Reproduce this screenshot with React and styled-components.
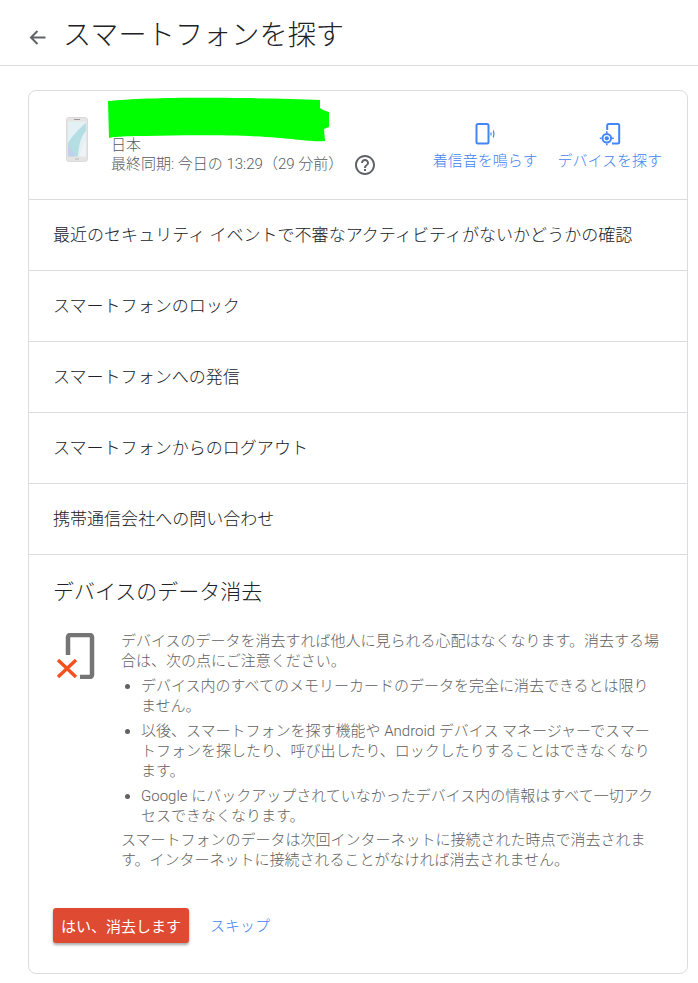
import React from "react";
import styled, { createGlobalStyle } from "styled-components";

const Global = createGlobalStyle`
  html, body { margin: 0; padding: 0; background: #fff; }
  body { font-family: Roboto, "Noto Sans CJK JP", sans-serif; font-weight: 300; color: #202124; }
`;

const Page = styled.div`
  width: 698px;
  height: 983px;
  overflow: hidden;
  background: #fff;
`;
const TopBar = styled.header`
  height: 65px;
  box-sizing: content-box;
  border-bottom: 1px solid #dadce0;
  display: flex;
  align-items: center;
  padding-left: 28px;
  gap: 17px;
`;
const BackIcon = styled.svg`
  width: 19px;
  height: 19px;
  flex: none;
  margin-top: 10px;
`;
const Title = styled.h1`
  margin: 7px 0 0 -1px;
  font-size: 28.2px;
  font-weight: 300;
  line-height: 36px;
  color: #202124;
`;
const Card = styled.section`
  margin: 24px 0 0 28px;
  width: 658px;
  height: 882px;
  border: 1px solid #dadce0;
  border-radius: 8px;
  overflow: hidden;
`;
const DeviceHead = styled.div`
  height: 108px;
  border-bottom: 1px solid #dadce0;
  display: flex;
  position: relative;
`;
const PhoneArt = styled.svg`
  width: 24px;
  height: 46px;
  margin: 26px 0 0 36px;
  flex: none;
`;
const DeviceInfo = styled.div`
  margin: 45px 0 0 22px;
  font-size: 15px;
  line-height: 19px;
  color: #555b60;
`;
const Scribble = styled.svg`
  position: absolute;
  left: 77px;
  top: 6px;
  width: 224px;
  height: 46px;
`;
const SyncRow = styled.div`
  display: flex;
  align-items: center;
  gap: 10px;
  height: 19px;
  white-space: nowrap;
`;
const HelpIcon = styled.svg`
  width: 24px;
  height: 24px;
  flex: none;
`;
const Actions = styled.div`
  display: flex;
  margin-left: auto;
  padding: 31px 25px 0 0;
  gap: 20px;
`;
const Action = styled.div`
  display: flex;
  flex-direction: column;
  align-items: center;
  font-size: 15px;
  line-height: 20px;
  color: #3f7ff0;
  white-space: nowrap;
  gap: 5px;
`;
const ActionIcon = styled.svg`
  width: 24px;
  height: 24px;
`;
const Row = styled.div`
  height: 71px;
  box-sizing: border-box;
  padding: 0 0 3px 24px;
  border-bottom: 1px solid #dadce0;
  display: flex;
  align-items: center;
  font-size: 17.05px;
  color: #202124;
`;
const Wipe = styled.div`
  padding: 23px 0 0 24px;
`;
const WipeTitle = styled.h2`
  margin: 0;
  font-size: 21px;
  line-height: 28px;
  font-weight: 300;
  color: #202124;
`;
const WipeBody = styled.div`
  display: flex;
  margin-top: 25px;
`;
const WipeIcon = styled.svg`
  width: 44px;
  height: 46px;
  flex: none;
  margin-top: 2px;
`;
const Copy = styled.div`
  margin-left: 24px;
  width: 540px;
  font-size: 15px;
  line-height: 20px;
  color: #616161;
`;
const Para = styled.p`
  margin: 0;
`;
const Bullets = styled.ul`
  margin: 5px 0 4px;
  padding: 0 0 0 20px;
`;
const Bullet = styled.li`
  margin: 0 0 5px;
  &:last-child { margin-bottom: 0; }
`;
const Buttons = styled.div`
  display: flex;
  align-items: center;
  margin-top: 38px;
  gap: 21px;
`;
const Danger = styled.button`
  width: 136px;
  height: 35px;
  border: 0;
  padding: 0;
  background: #df4a32;
  border-radius: 3px;
  box-shadow: 0 2px 3px rgba(0,0,0,.35);
  color: #fff;
  font: 400 15px Roboto, "Noto Sans CJK JP", sans-serif;
`;
const Skip = styled.a`
  color: #3f7ff0;
  font-size: 15px;
  margin-top: -2px;
`;

export default function App() {
  return (
    <Page>
      <Global />
      <TopBar>
        <BackIcon viewBox="0 0 19 19">
          <path d="M17.5 9.5H3M9.5 3 3 9.5 9.500 16" fill="none" stroke="#5f6368" strokeWidth="2" />
        </BackIcon>
        <Title>スマートフォンを探す</Title>
      </TopBar>
      <Card>
        <DeviceHead>
          <PhoneArt viewBox="0 0 24 46">
            <rect x="1.500" y="0.500" width="21" height="44" rx="2.500" fill="#e6e3e3" stroke="#dcdada" />
            <rect x="3" y="4.500" width="18" height="35" fill="#e3f1f4" />
            <path d="M3 26C7 20 14 11 21 6V14C17 18 14 25 13 39.500H3Z" fill="#b5dde4" />
            <path d="M3 39.500V27L10 39.500Z" fill="#c3cdee" />
            <path d="M15 39.500C16 32 18 27 21 23V39.500Z" fill="#eef3f6" />
            <path d="M9 2.500h6" stroke="#9b9999" strokeWidth="1" />
            <path d="M10 42h4" stroke="#bdbaba" strokeWidth="1" />
          </PhoneArt>
          <Scribble viewBox="0 0 224 46">
            <path d="M2 4C30 1 80 0 140 1 170 1.500 195 2 214 3V11L217 13 223 15V30L218 32 219 44C200 45 195 42 160 40 130 38 80 38 40 39 20 39 5 40 3 41Z" fill="#00ff00" />
          </Scribble>
          <DeviceInfo>
            日本
            <SyncRow>
              最終同期: 今日の 13:29（29 分前）
              <HelpIcon viewBox="0 0 24 24">
                <path fill="#5f6368" d="M11 18h2v-2h-2v2zm1-16C6.480 2 2 6.480 2 12s4.480 10 10 10 10-4.480 10-10S17.520 2 12 2zm0 18c-4.410 0-8-3.590-8-8s3.590-8 8-8 8 3.590 8 8-3.590 8-8 8zm0-14c-2.210 0-4 1.790-4 4h2c0-1.100.9-2 2-2s2 .9 2 2c0 2-3 1.750-3 5h2c0-2.250 3-2.500 3-5 0-2.210-1.790-4-4-4z" />
              </HelpIcon>
            </SyncRow>
          </DeviceInfo>
          <Actions>
            <Action>
              <ActionIcon viewBox="0 0 24 24">
                <rect x="3.500" y="2" width="12" height="19.500" rx="1.500" fill="none" stroke="#4285f4" strokeWidth="2" />
                <path d="M18 10.500v3" fill="none" stroke="#4285f4" strokeWidth="1.200" />
                <path d="M20.300 8.500c.8 2.200.8 4.800 0 7" fill="none" stroke="#4285f4" strokeWidth="1.200" />
              </ActionIcon>
              着信音を鳴らす
            </Action>
            <Action>
              <ActionIcon viewBox="0 0 24 24">
                <path d="M9.200 8V3.500C9.200 2.600 9.800 2 10.700 2H19.700C20.600 2 21.200 2.600 21.200 3.500V20C21.200 20.900 20.600 21.500 19.700 21.500H14" fill="none" stroke="#4285f4" strokeWidth="2" />
                <circle cx="8.800" cy="16.300" r="4.300" fill="#fff" stroke="#4285f4" strokeWidth="2" />
                <circle cx="8.800" cy="16.300" r="2.100" fill="#4285f4" />
                <path d="M8.800 9.300V11M8.800 21.600V23.300M1.800 16.300H3.500M14.100 16.300H15.800" stroke="#4285f4" strokeWidth="1.600" />
              </ActionIcon>
              デバイスを探す
            </Action>
          </Actions>
        </DeviceHead>
        <Row>最近のセキュリティ イベントで不審なアクティビティがないかどうかの確認</Row>
        <Row>スマートフォンのロック</Row>
        <Row>スマートフォンへの発信</Row>
        <Row>スマートフォンからのログアウト</Row>
        <Row>携帯通信会社への問い合わせ</Row>
        <Wipe>
          <WipeTitle>デバイスのデータ消去</WipeTitle>
          <WipeBody>
            <WipeIcon viewBox="0 0 44 46">
              <path d="M15 22V4C15 3 16 2 17 2H37C38 2 39 3 39 4V42C39 43 38 44 37 44H27" fill="none" stroke="#757575" strokeWidth="4.500" />
              <path d="M5 27 23 44M23 27 5 44" stroke="#f4511e" strokeWidth="3.400" fill="none" />
            </WipeIcon>
            <Copy>
              <Para>デバイスのデータを消去すれば他人に見られる心配はなくなります。消去する場合は、次の点にご注意ください。</Para>
              <Bullets>
                <Bullet>デバイス内のすべてのメモリーカードのデータを完全に消去できるとは限りません。</Bullet>
                <Bullet>以後、スマートフォンを探す機能や Android デバイス マネージャーでスマートフォンを探したり、呼び出したり、ロックしたりすることはできなくなります。</Bullet>
                <Bullet>Google にバックアップされていなかったデバイス内の情報はすべて一切アクセスできなくなります。</Bullet>
              </Bullets>
              <Para>スマートフォンのデータは次回インターネットに接続された時点で消去されます。インターネットに接続されることがなければ消去されません。</Para>
            </Copy>
          </WipeBody>
          <Buttons>
            <Danger>はい、消去します</Danger>
            <Skip>スキップ</Skip>
          </Buttons>
        </Wipe>
      </Card>
    </Page>
  );
}
